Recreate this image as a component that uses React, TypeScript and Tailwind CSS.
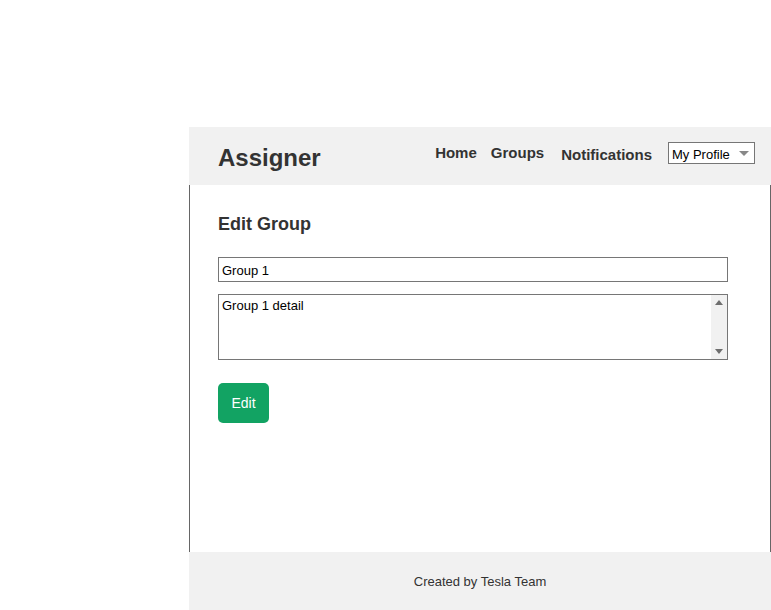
import React from 'react';

/* ─── Header ─────────────────────────────────────────────────────────── */
function Header() {
  return (
    <header className="h-[58px] bg-[#f1f1f1] flex items-center pl-[29px] pr-[16px]">
      <h1 className="text-[24px] font-bold text-[#333] leading-none mt-[4px]">Assigner</h1>

      <nav className="ml-auto flex items-center text-[15px] font-bold text-[#333]">
        <a className="-mt-[5px]">Home</a>
        <a className="ml-[14px] -mt-[5px]">Groups</a>
        <a className="ml-[17px] -mt-[2px]">Notifications</a>

        {/* Profile dropdown */}
        <div className="relative ml-[16px] -mt-[6px] w-[87px] h-[22px] border border-[#767676] bg-white">
          <select className="appearance-none w-full h-full pl-[3px] text-[13px] font-normal text-black bg-transparent outline-none">
            <option>My Profile</option>
          </select>
          <svg
            className="absolute right-[5px] top-[8px] pointer-events-none"
            width="10"
            height="5"
            viewBox="0 0 10 5"
          >
            <path d="M0 0h10L5 5z" fill="#888" />
          </svg>
        </div>
      </nav>
    </header>
  );
}

/* ─── Form ───────────────────────────────────────────────────────────── */
function EditForm() {
  return (
    <main className="h-[367px] border-x border-[#666] pl-[28px] pt-[27px]">
      <h2 className="text-[18px] font-bold text-[#333] leading-[24px]">Edit Group</h2>

      <input
        defaultValue="Group 1"
        className="block mt-[21px] w-[510px] h-[25px] border border-[#767676] px-[3px] pt-[1px] text-[13px] text-black outline-none"
      />

      {/* Textarea with classic scrollbar */}
      <div className="mt-[12px] w-[510px] h-[66px] border border-[#767676] flex">
        <textarea
          defaultValue="Group 1 detail"
          className="flex-1 resize-none px-[3px] pt-[3px] text-[13px] leading-[16px] text-black outline-none"
        />
        <div className="w-[16px] bg-[#f1f1f1] flex flex-col items-center justify-between py-[5px]">
          <svg width="8" height="5" viewBox="0 0 8 5">
            <path d="M0 5h8L4 0z" fill="#6e6e6e" />
          </svg>
          <svg width="8" height="5" viewBox="0 0 8 5">
            <path d="M0 0h8L4 5z" fill="#6e6e6e" />
          </svg>
        </div>
      </div>

      <button className="mt-[23px] w-[51px] h-[40px] rounded-[5px] bg-[#12a363] text-white text-[14px]">
        Edit
      </button>
    </main>
  );
}

/* ─── Page ───────────────────────────────────────────────────────────── */
export default function App() {
  return (
    <div className="min-h-[610px] bg-white pt-[127px] pl-[189px] font-['Liberation_Sans',Arial,sans-serif]">
      <div className="w-[582px]">
        <Header />
        <EditForm />
        <footer className="h-[58px] bg-[#f1f1f1] flex items-center justify-center pt-[1px] text-[13px] text-[#333]">
          Created by Tesla Team
        </footer>
      </div>
    </div>
  );
}
